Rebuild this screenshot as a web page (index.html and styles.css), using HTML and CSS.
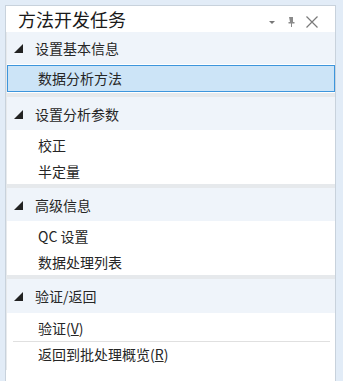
FILE: index.html
```html
<!DOCTYPE html>
<html lang="zh-CN">
<head>
<meta charset="UTF-8" />
<title>方法开发任务</title>
<link rel="stylesheet" href="styles.css">
</head>
<body>
<div class="panel">
  <div class="title-bar">
    <span class="title">方法开发任务</span>
    <div class="tools">
      <svg class="tool" width="10" height="10" viewBox="0 0 10 10"><polygon points="2,4 8,4 5,7" fill="#777"/></svg>
      <svg class="tool" width="10" height="12" viewBox="0 0 10 12"><path d="M3 1h4v5h1.5v1.5h-2.5v3.5h-1v-3.5h-2.5v-1.5h1.5z" fill="#8a8a8a"/></svg>
      <svg class="tool" width="14" height="14" viewBox="0 0 14 14"><path d="M1.5 1.5l11 11M12.5 1.5l-11 11" stroke="#7a7a7a" stroke-width="1.2" fill="none"/></svg>
    </div>
  </div>

  <div class="content">
    <!-- 设置基本信息 -->
    <div class="group first">
      <div class="group-head">
        <svg class="arrow" width="9" height="9" viewBox="0 0 9 9"><polygon points="9,0 9,9 0,9" fill="#222"/></svg>
        设置基本信息
      </div>
      <div class="items">
        <div class="item selected">数据分析方法</div>
      </div>
    </div>

    <!-- 设置分析参数 -->
    <div class="group">
      <div class="group-head">
        <svg class="arrow" width="9" height="9" viewBox="0 0 9 9"><polygon points="9,0 9,9 0,9" fill="#222"/></svg>
        设置分析参数
      </div>
      <div class="items">
        <div class="item">校正</div>
        <div class="item">半定量</div>
      </div>
    </div>

    <!-- 高级信息 -->
    <div class="group">
      <div class="group-head">
        <svg class="arrow" width="9" height="9" viewBox="0 0 9 9"><polygon points="9,0 9,9 0,9" fill="#222"/></svg>
        高级信息
      </div>
      <div class="items">
        <div class="item">QC 设置</div>
        <div class="item">数据处理列表</div>
      </div>
    </div>

    <!-- 验证/返回 -->
    <div class="group last">
      <div class="group-head">
        <svg class="arrow" width="9" height="9" viewBox="0 0 9 9"><polygon points="9,0 9,9 0,9" fill="#222"/></svg>
        验证/返回
      </div>
      <div class="items">
        <div class="item">验证(<u>V</u>)</div>
        <div class="item split">返回到批处理概览(<u>R</u>)</div>
      </div>
    </div>
  </div>
</div>
</body>
</html>
```

FILE: styles.css
```css
:root {
  --bg: #e2ecf7;
  --head-bg: #eff4fa;
  --band: #e6e9ec;
  --text: #262626;
  --sel-bg: #cce4f7;
  --sel-border: #3d95dc;
}
body {
  margin: 0;
  background: var(--bg);
  font-family: "Noto Sans CJK SC", "Noto Sans", sans-serif;
  color: var(--text);
}
.panel {
  margin: 5px 7px 0 5px;
  height: 376px;
  border: 1px solid #c8d2dc;
  border-bottom: none;
  background: #fff;
  box-sizing: border-box;
}
.title-bar {
  height: 26px;
  display: flex;
  align-items: center;
  justify-content: space-between;
  padding: 0 16px 0 12px;
}
.title {
  font-size: 18px;
  color: #1a1a1a;
  line-height: 24px;
}
.tools {
  display: flex;
  align-items: center;
  gap: 9px;
  margin-top: 6px;
}
.content {
  background: var(--band);
  padding: 0 0 0 1px;
}
.group {
  background: #fff;
  margin-bottom: 4px;
}
.group-head {
  height: 33px;
  display: flex;
  align-items: center;
  gap: 12px;
  padding-left: 7px;
  background: var(--head-bg);
  font-size: 14px;
}
.arrow {
  margin-top: 1px;
}
.items {
  padding-top: 2px;
}
.item {
  height: 26px;
  line-height: 26px;
  padding-left: 31px;
  font-size: 14px;
  box-sizing: border-box;
}
.group.first .group-head {
  height: 32px;
}
.group.first .items {
  padding: 1px 0 1px;
}
.item.selected {
  height: 27px;
  line-height: 25px;
  background: var(--sel-bg);
  border: 1px solid var(--sel-border);
  padding-left: 30px;
}
.group.last {
  margin-bottom: 0;
  padding-bottom: 2px;
}
.group.last .group-head {
  height: 34px;
}
.item.split {
  border-top: 1px solid #e0e0e0;
  margin: 0 5px 0 6px;
  padding-left: 25px;
  height: 27px;
  line-height: 25px;
}
```
